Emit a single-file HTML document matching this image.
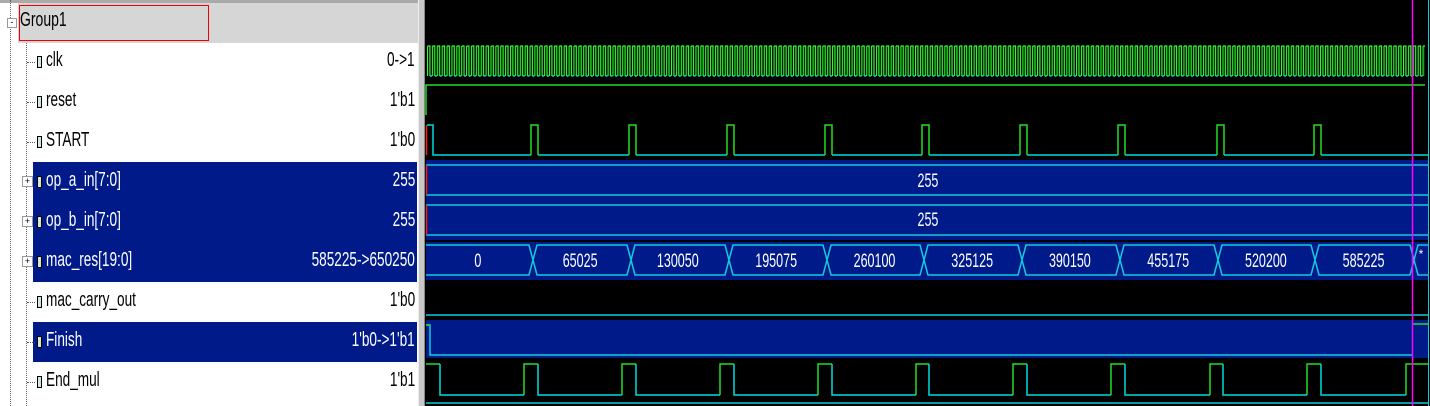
<!DOCTYPE html>
<html><head><meta charset="utf-8"><style>
body{margin:0;width:1430px;height:406px;overflow:hidden;background:#fff;font-family:"Liberation Sans",sans-serif;position:relative}
.l{position:absolute;left:0;top:0;width:418px;height:406px;background:#fff}
.row{position:absolute;left:0;width:418px;height:40px}
.sel{position:absolute;left:33px;right:1px;top:0;bottom:0;background:#001a8a}
.nm{position:absolute;left:46px;top:7px;font-size:20px;transform:scaleX(.68);transform-origin:left;white-space:nowrap;color:#000}
.v{position:absolute;right:3px;top:7px;font-size:20px;transform:scaleX(.68);transform-origin:right;white-space:nowrap;color:#000}
.w .nm,.w .v{color:#fff}
.ic{position:absolute;left:37px;top:14px;width:3px;height:10px;border:1px solid #000;background:#cfe8d8}
.dash{position:absolute;left:27px;top:20px;width:8px;border-top:1px dotted #555}
.pl{position:absolute;left:22px;top:14px;width:9px;height:9px;border:1px solid #999;background:#fff;font-size:9px;line-height:9px;text-align:center;color:#000}
</style></head><body>
<div class="l">
<div style="position:absolute;left:0;top:0;width:418px;height:3px;background:#aaa"></div>
<div style="position:absolute;left:10px;top:0;height:406px;border-left:1px dotted #666"></div>
<div style="position:absolute;left:26px;top:42px;height:364px;border-left:1px dotted #666"></div>
<div style="position:absolute;left:18px;top:3px;width:400px;height:40px;background:#d6d6d6"></div>
<div style="position:absolute;left:19px;top:5px;width:188px;height:34px;border:1px solid #e00"></div>
<div style="position:absolute;left:7px;top:18px;width:8px;height:8px;border:1px solid #999;background:#fff;font-size:9px;line-height:7px;text-align:center">-</div>
<div style="position:absolute;left:20px;top:9px;font-size:20px;transform:scaleX(.7);transform-origin:left">Group1</div>

<div class="row" style="top:42px"><div class="dash"></div><div class="ic"></div><div class="nm">clk</div><div class="v">0-&gt;1</div></div>
<div class="row" style="top:82px"><div class="dash"></div><div class="ic"></div><div class="nm">reset</div><div class="v">1'b1</div></div>
<div class="row" style="top:122px"><div class="dash"></div><div class="ic"></div><div class="nm">START</div><div class="v">1'b0</div></div>
<div class="row w" style="top:162px"><div class="sel"></div><div class="pl">+</div><div class="ic"></div><div class="nm">op_a_in[7:0]</div><div class="v">255</div></div>
<div class="row w" style="top:202px"><div class="sel"></div><div class="pl">+</div><div class="ic"></div><div class="nm">op_b_in[7:0]</div><div class="v">255</div></div>
<div class="row w" style="top:242px"><div class="sel"></div><div class="pl">+</div><div class="ic"></div><div class="nm">mac_res[19:0]</div><div class="v">585225-&gt;650250</div></div>
<div class="row" style="top:282px"><div class="dash"></div><div class="ic"></div><div class="nm">mac_carry_out</div><div class="v">1'b0</div></div>
<div class="row w" style="top:322px"><div class="sel"></div><div class="dash"></div><div class="ic"></div><div class="nm">Finish</div><div class="v">1'b0-&gt;1'b1</div></div>
<div class="row" style="top:362px"><div class="dash"></div><div class="ic"></div><div class="nm">End_mul</div><div class="v">1'b1</div></div>
</div>
<div style="position:absolute;left:418px;top:0;width:7px;height:406px;background:#c8c8c8;border-left:1px solid #eee;border-right:1px solid #888;box-sizing:border-box"></div>
<svg style="position:absolute;left:0;top:0" width="1430" height="406" viewBox="0 0 1430 406">
<defs>
<pattern id="clk" x="427" y="45" width="4.88" height="32" patternUnits="userSpaceOnUse">
<path d="M0.5 1V31M0.5 1H2.9V31" stroke="#3f3" fill="none" stroke-width="1.2"/>
<path d="M2.9 31H4.88" stroke="#0ee" fill="none" stroke-width="1.4"/>
</pattern>
</defs>
<rect x="425" y="0" width="1005" height="406" fill="#000"/>
<rect x="427" y="45" width="998" height="32" fill="url(#clk)"/>
<path d="M426 115V85H1425" stroke="#2d2" fill="none" stroke-width="1.5"/>
<path d="M426.5 125V155" stroke="#e22" stroke-width="1.5"/>
<g fill="none" stroke-width="1.5">
<path d="M427 125H433V155H531M538 155H629M636 155H727M734 155H825M832 155H922M929 155H1020M1027 155H1118M1125 155H1217M1224 155H1314M1321 155H1428" stroke="#0dd"/>
<path d="M531 155V125H538V155M629 155V125H636V155M727 155V125H734V155M825 155V125H832V155M922 155V125H929V155M1020 155V125H1027V155M1118 155V125H1125V155M1217 155V125H1224V155M1314 155V125H1321V155" stroke="#2d2"/>
</g>
<rect x="426" y="160" width="1002" height="40" fill="#001a8a"/>
<rect x="426" y="200" width="1002" height="40" fill="#001a8a"/>
<rect x="426" y="242" width="1002" height="38" fill="#001a8a"/>
<rect x="426" y="320" width="1002" height="38" fill="#001a8a"/>
<path d="M426 165H1428M426 195H1428M426 205H1428M426 235H1428M426 315H1428" stroke="#1cd" stroke-width="1.5"/>
<path d="M426.5 165V195M426.5 205V235" stroke="#e22" stroke-width="1.5"/>
<path d="M426 245H529L533 260L537 245H627L631 260L635 245H725L729 260L733 245H823L827 260L831 245H920L924 260L928 245H1018L1022 260L1026 245H1116L1120 260L1124 245H1214L1218 260L1222 245H1311L1315 260L1319 245H1410L1414 260L1418 245H1428
M426 275H529L533 260L537 275H627L631 260L635 275H725L729 260L733 275H823L827 260L831 275H920L924 260L928 275H1018L1022 260L1026 275H1116L1120 260L1124 275H1214L1218 260L1222 275H1311L1315 260L1319 275H1410L1414 260L1418 275H1428" stroke="#1cd" fill="none" stroke-width="1.5"/>
<path d="M426 325H430V355H1412" stroke="#1cd" fill="none" stroke-width="1.5"/>
<path d="M426 325H430" stroke="#2d2" stroke-width="1.5"/>
<path d="M1412 324H1428" stroke="#2d2" stroke-width="1.5"/>
<g fill="none" stroke-width="1.5">
<path d="M426 364H440M524 395V364H538M622 395V364H636M720 395V364H734M818 395V364H832M916 395V364H929M1013 395V364H1027M1111 395V364H1125M1210 395V364H1223M1307 395V364H1321M1406 395V364H1428" stroke="#2d2"/>
<path d="M440 364V395H524M538 364V395H622M636 364V395H720M734 364V395H818M832 364V395H916M929 364V395H1013M1027 364V395H1111M1125 364V395H1210M1223 364V395H1307M1321 364V395H1406" stroke="#0dd"/>
<path d="M426 403H1428" stroke="#1cd"/>
</g>
<line x1="1412.5" y1="0" x2="1412.5" y2="406" stroke="#f0f" stroke-width="1.5"/>
<line x1="1428.5" y1="0" x2="1428.5" y2="406" stroke="#1cd" stroke-width="1"/>
<g fill="#fff" font-family="Liberation Sans,sans-serif" font-size="19" text-anchor="middle">
<g transform="scale(.66,1)">
<text x="1406" y="187">255</text>
<text x="1406" y="226">255</text>
<text x="724" y="267">0</text>
<text x="879" y="267">65025</text>
<text x="1027" y="267">130050</text>
<text x="1176" y="267">195075</text>
<text x="1325" y="267">260100</text>
<text x="1473" y="267">325125</text>
<text x="1621" y="267">390150</text>
<text x="1770" y="267">455175</text>
<text x="1918" y="267">520200</text>
<text x="2066" y="267">585225</text>
</g>
<text x="1421" y="258" font-size="12">*</text>
</g>
</svg>
</body></html>
